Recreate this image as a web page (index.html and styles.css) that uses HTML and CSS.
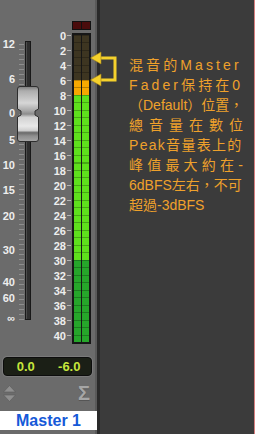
FILE: index.html
```html
<!DOCTYPE html>
<html lang="zh-Hant">

<head>
    <meta charset="UTF-8">
    <meta name="viewport" content="width=device-width, initial-scale=1.0">
    <title>Master Fader</title>
    <link rel="stylesheet" href="styles.css">
</head>

<body>
    <div class="app">
        <div class="strip">
            <div class="mixer">
                <!-- 推桿 -->
                <div class="fader">
                    <div class="fader-ticks"></div>
                    <span class="fl" style="top:38px">12</span>
                    <span class="fl" style="top:73px">6</span>
                    <span class="fl" style="top:107px">0</span>
                    <span class="fl" style="top:134px">5</span>
                    <span class="fl" style="top:159px">10</span>
                    <span class="fl" style="top:184px">15</span>
                    <span class="fl" style="top:210px">20</span>
                    <span class="fl" style="top:244px">30</span>
                    <span class="fl" style="top:276px">40</span>
                    <span class="fl" style="top:292px">60</span>
                    <span class="fl" style="top:312px">∞</span>
                    <div class="track"></div>
                    <svg class="cap" width="22" height="56" viewBox="0 0 22 56">
                        <defs>
                            <linearGradient id="capg" x1="0" y1="0" x2="0" y2="1">
                                <stop offset="0" stop-color="#7a7a7a" />
                                <stop offset="0.08" stop-color="#adadad" />
                                <stop offset="0.3" stop-color="#d6d6d6" />
                                <stop offset="0.44" stop-color="#a8a8a8" />
                                <stop offset="0.5" stop-color="#8c8c8c" />
                                <stop offset="0.56" stop-color="#d2d2d2" />
                                <stop offset="0.72" stop-color="#e8e8e8" />
                                <stop offset="0.8" stop-color="#cfcfcf" />
                                <stop offset="0.84" stop-color="#6a6a6a" />
                                <stop offset="0.9" stop-color="#8e8e8e" />
                                <stop offset="1" stop-color="#a8a8a8" />
                            </linearGradient>
                        </defs>
                        <path d="M3 0.5H19Q21.5 0.5 21.5 3V23L18 25V29L21.5 31V53Q21.5 55.5 19 55.5H3Q0.5 55.5 0.5 53V31L4 29V25L0.5 23V3Q0.5 0.5 3 0.5Z" fill="url(#capg)" stroke="#2e2e2e" stroke-width="1" />
                    </svg>
                </div>

                <!-- 音量表刻度 -->
                <div class="meter-scale">
                    <div class="ml"><span>0</span><i></i></div>
                    <div class="ml"><span>2</span><i></i></div>
                    <div class="ml"><span>4</span><i></i></div>
                    <div class="ml"><span>6</span><i></i></div>
                    <div class="ml"><span>8</span><i></i></div>
                    <div class="ml"><span>10</span><i></i></div>
                    <div class="ml"><span>12</span><i></i></div>
                    <div class="ml"><span>14</span><i></i></div>
                    <div class="ml"><span>16</span><i></i></div>
                    <div class="ml"><span>18</span><i></i></div>
                    <div class="ml"><span>20</span><i></i></div>
                    <div class="ml"><span>22</span><i></i></div>
                    <div class="ml"><span>24</span><i></i></div>
                    <div class="ml"><span>26</span><i></i></div>
                    <div class="ml"><span>28</span><i></i></div>
                    <div class="ml"><span>30</span><i></i></div>
                    <div class="ml"><span>32</span><i></i></div>
                    <div class="ml"><span>34</span><i></i></div>
                    <div class="ml"><span>36</span><i></i></div>
                    <div class="ml"><span>38</span><i></i></div>
                    <div class="ml"><span>40</span><i></i></div>
                </div>

                <!-- 音量表 -->
                <div class="meter-col">
                    <div class="peak"><span></span><span></span></div>
                    <div class="meter">
                        <div class="bar"></div>
                        <div class="bar"></div>
                    </div>
                </div>
            </div>

            <div class="readout"><span>0.0</span><span>-6.0</span></div>

            <div class="controls">
                <svg width="13" height="17" viewBox="0 0 13 17">
                    <path d="M6.5 0.5L12.5 7H0.5Z" fill="#8f8f8f" stroke="#5a5a5a" stroke-width="0.6" />
                    <path d="M0.5 10H12.5L6.5 16.5Z" fill="#8f8f8f" stroke="#5a5a5a" stroke-width="0.6" />
                </svg>
                <span class="sigma">Σ</span>
            </div>

            <div class="name">Master 1</div>
        </div>

        <div class="note">
            <svg class="pointer" width="30" height="40" viewBox="0 0 30 40">
                <path d="M10 8H25V30H10" fill="none" stroke="#f5d12c" stroke-width="3" />
                <path d="M0.5 8L11 2V14Z" fill="#f5d12c" stroke="#a8861a" stroke-width="0.6" />
                <path d="M0.5 30L11 24V36Z" fill="#f5d12c" stroke="#a8861a" stroke-width="0.6" />
            </svg>
            <div class="text">
                <div class="ln sp3">混音的Master</div>
                <div class="ln sp3">Fader保持在0</div>
                <div class="ln">（Default）位置，</div>
                <div class="ln sp6">總音量在數位</div>
                <div class="ln sp1">Peak音量表上的</div>
                <div class="ln sp4">峰值最大約在-</div>
                <div class="ln">6dBFS左右，不可</div>
                <div class="ln">超過-3dBFS</div>
            </div>
        </div>
    </div>
</body>

</html>
```

FILE: styles.css
```css
* {
    margin: 0;
    padding: 0;
    box-sizing: border-box;
}

body {
    width: 255px;
    height: 434px;
    overflow: hidden;
    background-color: #3b3b3b;
    font-family: "Liberation Sans", "Noto Sans CJK TC", sans-serif;
}

.app {
    display: flex;
    height: 434px;
}

/* 左邊的通道 */
.strip {
    display: flex;
    flex-direction: column;
    width: 100px;
    background-color: #6b6b6b;
    border-right: 3px solid #2a2a2a;
    box-shadow: inset -2px 0 #5a5a5a;
}

.mixer {
    display: flex;
    height: 350px;
}

.fader {
    position: relative;
    width: 42px;
}

.fader-ticks {
    position: absolute;
    left: 19px;
    top: 44px;
    width: 5px;
    height: 276px;
    background: repeating-linear-gradient(to bottom, #8e8e8e 0 1px, transparent 1px 5px);
}

.fl {
    position: absolute;
    left: 0;
    width: 15px;
    text-align: right;
    font-size: 11px;
    font-weight: bold;
    line-height: 12px;
    color: #eeeeee;
}

.track {
    position: absolute;
    left: 25px;
    top: 41px;
    width: 6px;
    height: 279px;
    background-color: #2e2e2e;
    border: 1px solid #181818;
    box-shadow: inset 1px 0 #4c4c4c;
}

.cap {
    position: absolute;
    left: 17px;
    top: 86px;
}

.meter-scale {
    width: 30px;
    padding-top: 28px;
    padding-right: 1px;
}

.ml {
    display: flex;
    justify-content: flex-end;
    align-items: center;
    height: 15px;
}

.ml span {
    font-size: 11px;
    font-weight: bold;
    color: #eeeeee;
}

.ml i {
    width: 4px;
    height: 1px;
    margin-left: 1px;
    background-color: #b4b4b4;
}

.meter-col {
    width: 19px;
    padding-top: 21px;
}

.peak {
    display: flex;
    gap: 1px;
    height: 9px;
    padding: 1px;
    background-color: #111;
}

.peak span {
    flex: 1;
    background-color: #4a0c0c;
}

.meter {
    display: flex;
    gap: 1px;
    height: 311px;
    margin-top: 3px;
    padding: 2px;
    background-color: #161616;
}

.bar {
    flex: 1;
    background:
        repeating-linear-gradient(to bottom, rgba(0, 0, 0, 0.25) 0 1px, transparent 1px 7.5px),
        linear-gradient(to bottom, #3d3521 0 45px, #f6a800 45px 60px, #5ee01c 60px 225px, #26a62a 225px);
}

/* 數字顯示 */
.readout {
    display: flex;
    height: 19px;
    margin: 7px 5px 0 3px;
    background-color: #1b1f16;
    border: 1px solid #0d0d0d;
    border-radius: 4px;
    box-shadow: 0 0 0 1px #7a7a7a;
}

.readout span {
    flex: 1;
    text-align: center;
    font-size: 13px;
    font-weight: bold;
    line-height: 17px;
    color: #c6e63c;
}

.controls {
    display: flex;
    justify-content: space-between;
    align-items: center;
    height: 35px;
    padding: 0 7px 0 3px;
}

.sigma {
    font-size: 20px;
    font-weight: bold;
    color: #a6a6a6;
    text-shadow: 0 1px 0 #555;
}

.name {
    height: 19px;
    background-color: #fff;
    text-align: center;
    font-size: 16px;
    font-weight: bold;
    line-height: 19px;
    color: #1559d8;
}

/* 右邊說明 */
.note {
    position: relative;
    flex: 1;
    border-right: 1px solid #d88080;
    padding: 55px 0 0 29px;
}

.pointer {
    position: absolute;
    left: -10px;
    top: 50px;
}

.ln {
    height: 20px;
    font-size: 14px;
    line-height: 20px;
    color: #efa12b;
    white-space: nowrap;
}

/* 每行字距 */
.sp1 {
    letter-spacing: 1.3px;
}

.sp3 {
    letter-spacing: 3.1px;
}

.sp4 {
    letter-spacing: 4.2px;
}

.sp6 {
    letter-spacing: 6px;
}
```
